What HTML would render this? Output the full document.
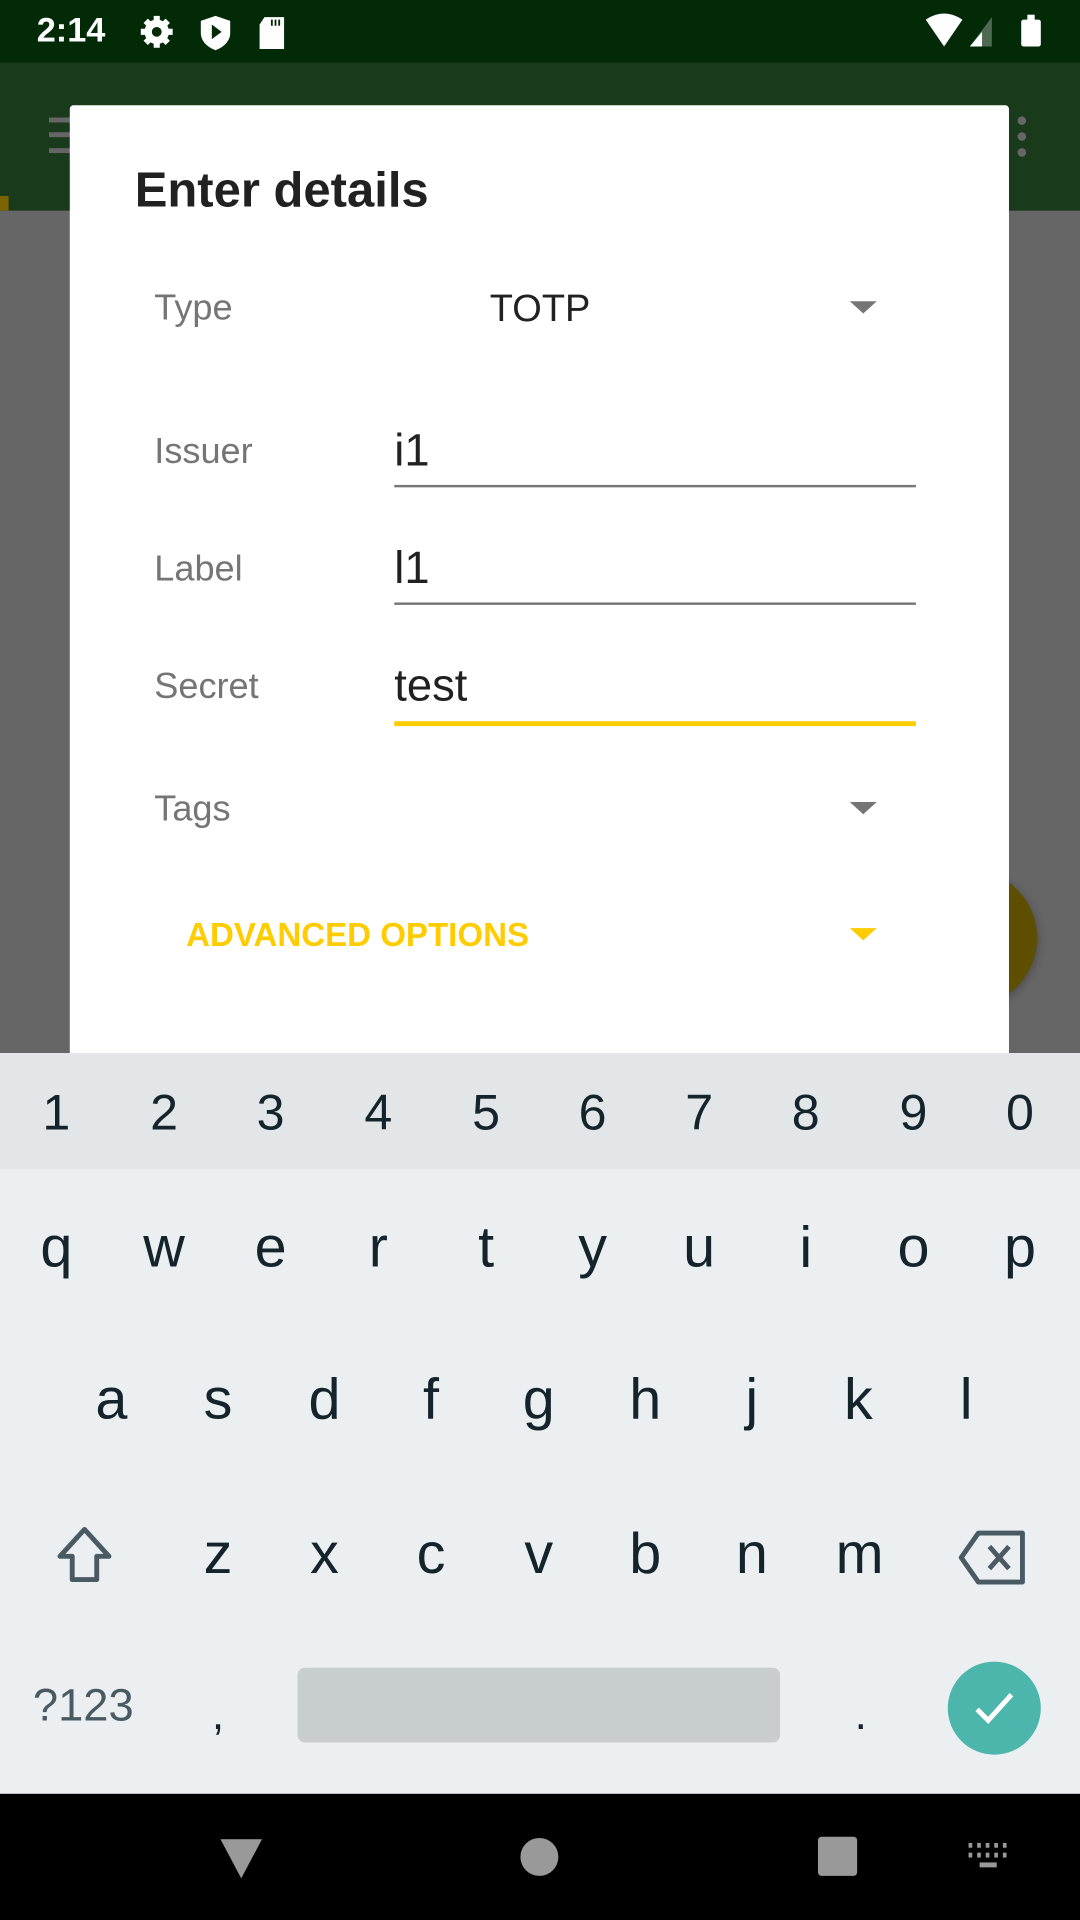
<!DOCTYPE html>
<html><head><meta charset="utf-8"><style>
html,body{margin:0;padding:0;width:1080px;height:1920px;overflow:hidden;background:#000}
#w{position:absolute;left:0;top:0;width:882px;height:1568px;transform:scale(1.22449);transform-origin:0 0;font-family:"Liberation Sans",sans-serif;overflow:hidden}
.a{position:absolute}
.t{position:absolute;white-space:nowrap;transform:translate(-50%,-50%)}
.l{position:absolute;white-space:nowrap;transform:translateY(-50%)}
.lab{font-size:29.5px;color:#757575;left:126px}
.k{font-size:47px;color:#15232b}
.n{font-size:41px;color:#15232b}
.tri{position:absolute;width:0;height:0;border-left:11px solid transparent;border-right:11px solid transparent;border-top:10px solid #757575}
</style></head><body><div id="w">
<div class="a" style="left:0;top:0;width:882px;height:51px;background:#022a07"></div>
<div class="l" style="left:30px;top:25px;font-size:28px;color:#fff;font-weight:bold">2:14</div>
<svg class="a" style="left:112px;top:10px" width="140" height="32" viewBox="0 0 140 32">
<g fill="#fff"><circle cx="16" cy="16" r="10"/><g stroke="#fff" stroke-width="5"><line x1="16" y1="3" x2="16" y2="29"/><line x1="3" y1="16" x2="29" y2="16"/><line x1="7" y1="7" x2="25" y2="25"/><line x1="25" y1="7" x2="7" y2="25"/></g><circle cx="16" cy="16" r="4" fill="#022a07"/>
<path d="M64 3 L76 7 V17 C76 24 70 29 64 31 C58 29 52 24 52 17 V7 Z"/><path d="M61 10 L69 16 L61 22 Z" fill="#022a07"/>
<path d="M104 4 H120 V30 H100 V10 Z"/></g><g stroke="#022a07" stroke-width="1.5"><line x1="110" y1="6" x2="110" y2="11"/><line x1="113" y1="6" x2="113" y2="11"/><line x1="116" y1="6" x2="116" y2="11"/></g></svg>
<svg class="a" style="left:752px;top:10px" width="110" height="32" viewBox="0 0 110 32">
<path d="M4 6 Q19 -4 34 6 L19 28 Z" fill="#fff"/><path d="M40 28 L58 4 V28 Z" fill="#4f6a52"/><path d="M40 28 L50 16 V28 Z" fill="#fff"/>
<rect x="82" y="6" width="16" height="22" rx="2" fill="#fff"/><rect x="87" y="2" width="6" height="5" fill="#fff"/></svg>
<div class="a" style="left:0;top:51px;width:882px;height:121px;background:#1a3b1b"></div>
<div class="a" style="left:40px;top:96px;width:20px;height:4px;background:#666"></div>
<div class="a" style="left:40px;top:108px;width:20px;height:4px;background:#666"></div>
<div class="a" style="left:40px;top:121px;width:20px;height:4px;background:#666"></div>
<div class="a" style="left:831px;top:95px;width:7px;height:7px;border-radius:50%;background:#666"></div>
<div class="a" style="left:831px;top:108px;width:7px;height:7px;border-radius:50%;background:#666"></div>
<div class="a" style="left:831px;top:121px;width:7px;height:7px;border-radius:50%;background:#666"></div>
<div class="a" style="left:0;top:172px;width:882px;height:700px;background:#666"></div>
<div class="a" style="left:0;top:160px;width:7px;height:12px;background:#7a6300"></div>
<div class="a" style="left:735px;top:710px;width:112px;height:112px;border-radius:50%;background:#5e4e00;box-shadow:0 2px 8px rgba(0,0,0,.3)"></div>
<div class="a" style="left:57px;top:86px;width:767px;height:790px;background:#fff;border-radius:3px"></div>
<div class="l" style="left:110px;top:156px;font-size:40px;color:#212121;font-weight:bold">Enter details</div>
<div class="l lab" style="top:252px">Type</div>
<div class="l" style="left:400px;top:252px;font-size:31px;color:#212121">TOTP</div>
<div class="tri" style="left:694px;top:246px"></div>
<div class="l lab" style="top:369px">Issuer</div>
<div class="l" style="left:322px;top:368px;font-size:37px;color:#212121">i1</div>
<div class="a" style="left:322px;top:396px;width:426px;height:2px;background:#777"></div>
<div class="l lab" style="top:465px">Label</div>
<div class="l" style="left:322px;top:464px;font-size:37px;color:#212121">l1</div>
<div class="a" style="left:322px;top:492px;width:426px;height:2px;background:#777"></div>
<div class="l lab" style="top:561px">Secret</div>
<div class="l" style="left:322px;top:560px;font-size:37px;color:#212121">test</div>
<div class="a" style="left:322px;top:589px;width:426px;height:4px;background:#ffcc00"></div>
<div class="l lab" style="top:661px">Tags</div>
<div class="tri" style="left:694px;top:655px"></div>
<div class="l" style="left:152px;top:764px;font-size:27px;color:#ffcc00;font-weight:bold">ADVANCED OPTIONS</div>
<div class="tri" style="left:694px;top:758px;border-top-color:#ffcc00"></div>
<div class="a" style="left:0;top:860px;width:882px;height:605px;background:#eceff1"></div>
<div class="a" style="left:0;top:860px;width:882px;height:95px;background:#e2e6e9"></div>
<div class="t n" style="left:46px;top:909px">1</div><div class="t n" style="left:134px;top:909px">2</div><div class="t n" style="left:221px;top:909px">3</div><div class="t n" style="left:309px;top:909px">4</div><div class="t n" style="left:397px;top:909px">5</div><div class="t n" style="left:484px;top:909px">6</div><div class="t n" style="left:571px;top:909px">7</div><div class="t n" style="left:658px;top:909px">8</div><div class="t n" style="left:746px;top:909px">9</div><div class="t n" style="left:833px;top:909px">0</div>
<div class="t k" style="left:46px;top:1018px">q</div><div class="t k" style="left:134px;top:1018px">w</div><div class="t k" style="left:221px;top:1018px">e</div><div class="t k" style="left:309px;top:1018px">r</div><div class="t k" style="left:397px;top:1018px">t</div><div class="t k" style="left:484px;top:1018px">y</div><div class="t k" style="left:571px;top:1018px">u</div><div class="t k" style="left:658px;top:1018px">i</div><div class="t k" style="left:746px;top:1018px">o</div><div class="t k" style="left:833px;top:1018px">p</div>
<div class="t k" style="left:91px;top:1142px">a</div><div class="t k" style="left:178px;top:1142px">s</div><div class="t k" style="left:265px;top:1142px">d</div><div class="t k" style="left:352px;top:1142px">f</div><div class="t k" style="left:440px;top:1142px">g</div><div class="t k" style="left:527px;top:1142px">h</div><div class="t k" style="left:614px;top:1142px">j</div><div class="t k" style="left:701px;top:1142px">k</div><div class="t k" style="left:789px;top:1142px">l</div>
<div class="t k" style="left:178px;top:1268px">z</div><div class="t k" style="left:265px;top:1268px">x</div><div class="t k" style="left:352px;top:1268px">c</div><div class="t k" style="left:440px;top:1268px">v</div><div class="t k" style="left:527px;top:1268px">b</div><div class="t k" style="left:614px;top:1268px">n</div><div class="t k" style="left:702px;top:1268px">m</div>
<svg class="a" style="left:44px;top:1246px" width="52" height="48" viewBox="0 0 52 48"><path d="M25 3 L45 25 H35 V44 H15 V25 H5 Z" fill="none" stroke="#4a5a63" stroke-width="4" stroke-linejoin="round"/></svg>
<svg class="a" style="left:782px;top:1249px" width="58" height="46" viewBox="0 0 58 46"><path d="M17 3 H53 V43 H17 L3 23 Z" fill="none" stroke="#4a5a63" stroke-width="4" stroke-linejoin="round"/><path d="M26 14 L42 32 M42 14 L26 32" stroke="#4a5a63" stroke-width="4"/></svg>
<div class="t" style="left:68px;top:1393px;font-size:37px;color:#4a5a63">?123</div>
<div class="t" style="left:178px;top:1400px;font-size:36px;color:#15232b">,</div>
<div class="a" style="left:243px;top:1362px;width:394px;height:61px;background:#c8cdd0;border-radius:6px"></div>
<div class="t" style="left:703px;top:1400px;font-size:36px;color:#15232b">.</div>
<div class="a" style="left:774px;top:1357px;width:76px;height:76px;border-radius:50%;background:#4db6ac"></div>
<svg class="a" style="left:794px;top:1378px" width="36" height="34" viewBox="0 0 36 34"><path d="M4 18 L13 27 L32 6" fill="none" stroke="#fff" stroke-width="4"/></svg>
<div class="a" style="left:0;top:1465px;width:882px;height:103px;background:#000"></div>
<svg class="a" style="left:180px;top:1502px" width="34" height="32"><path d="M0 0 H34 L17 32 Z" fill="#999"/></svg>
<div class="a" style="left:425px;top:1501px;width:31px;height:31px;border-radius:50%;background:#999"></div>
<div class="a" style="left:668px;top:1500px;width:32px;height:32px;border-radius:3px;background:#999"></div>
<svg class="a" style="left:790px;top:1505px" width="36" height="22"><g fill="#999"><rect x="1" y="0" width="3" height="4"/><rect x="8" y="0" width="3" height="4"/><rect x="15" y="0" width="3" height="4"/><rect x="22" y="0" width="3" height="4"/><rect x="29" y="0" width="3" height="4"/><rect x="1" y="8" width="3" height="4"/><rect x="8" y="8" width="3" height="4"/><rect x="15" y="8" width="3" height="4"/><rect x="22" y="8" width="3" height="4"/><rect x="29" y="8" width="3" height="4"/><rect x="10" y="16" width="14" height="4"/></g></svg>
</div></body></html>
